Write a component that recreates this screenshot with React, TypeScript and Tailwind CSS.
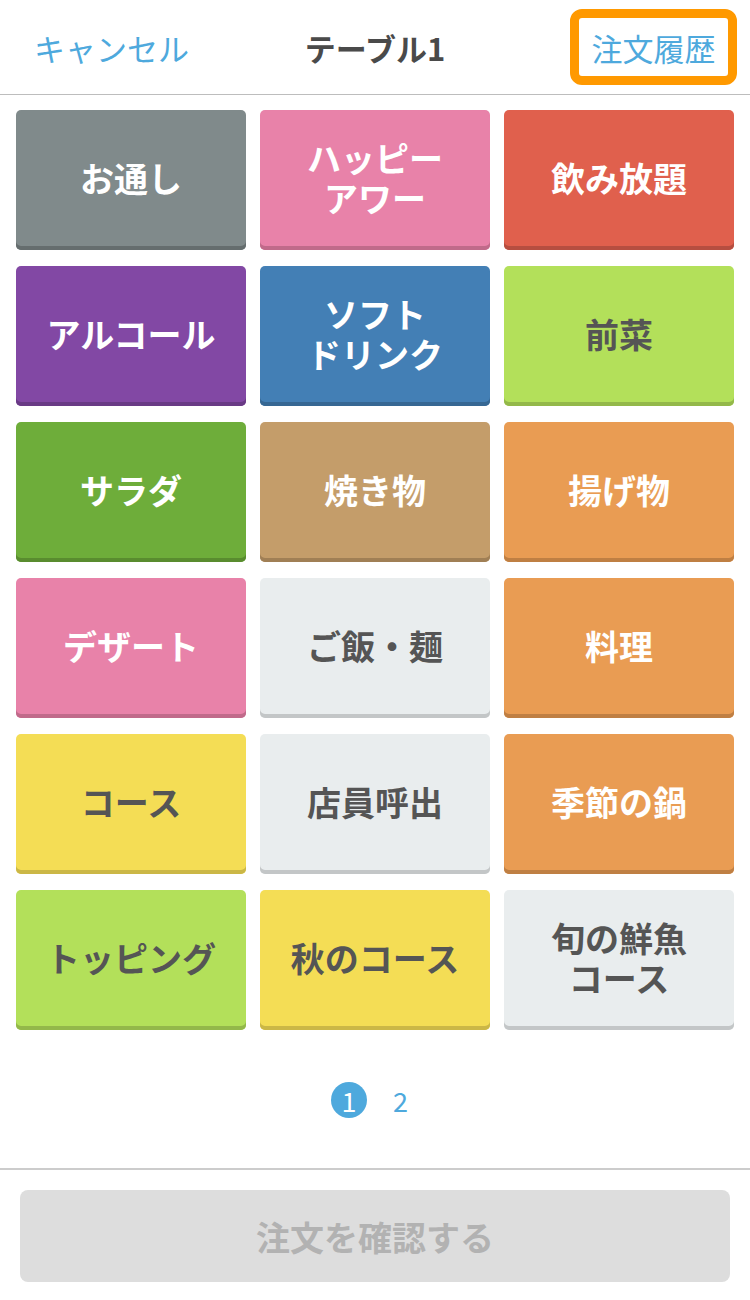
import React from 'react';

type Tile = {
  label: string[];
  bg: string;
  dark?: boolean;
};

// カテゴリーボタン一覧
const tiles: Tile[] = [
  { label: ['お通し'], bg: 'bg-[#808a8b] shadow-[inset_0_-4px_0_#656d6e]' },
  { label: ['ハッピー', 'アワー'], bg: 'bg-[#e882a9] shadow-[inset_0_-4px_0_#c06a8a]' },
  { label: ['飲み放題'], bg: 'bg-[#e0604d] shadow-[inset_0_-4px_0_#b64e40]' },
  { label: ['アルコール'], bg: 'bg-[#8248a4] shadow-[inset_0_-4px_0_#693a85]' },
  { label: ['ソフト', 'ドリンク'], bg: 'bg-[#437fb5] shadow-[inset_0_-4px_0_#366793]' },
  { label: ['前菜'], bg: 'bg-[#b3e05a] shadow-[inset_0_-4px_0_#93b84a]', dark: true },
  { label: ['サラダ'], bg: 'bg-[#6ead3a] shadow-[inset_0_-4px_0_#598c2f]' },
  { label: ['焼き物'], bg: 'bg-[#c49d6a] shadow-[inset_0_-4px_0_#a07f55]' },
  { label: ['揚げ物'], bg: 'bg-[#e99c53] shadow-[inset_0_-4px_0_#bf7f43]' },
  { label: ['デザート'], bg: 'bg-[#e882a9] shadow-[inset_0_-4px_0_#c06a8a]' },
  { label: ['ご飯・麺'], bg: 'bg-[#e9edee] shadow-[inset_0_-4px_0_#c3c6c7]', dark: true },
  { label: ['料理'], bg: 'bg-[#e99c53] shadow-[inset_0_-4px_0_#bf7f43]' },
  { label: ['コース'], bg: 'bg-[#f4dd55] shadow-[inset_0_-4px_0_#cbb746]', dark: true },
  { label: ['店員呼出'], bg: 'bg-[#e9edee] shadow-[inset_0_-4px_0_#c3c6c7]', dark: true },
  { label: ['季節の鍋'], bg: 'bg-[#e99c53] shadow-[inset_0_-4px_0_#bf7f43]' },
  { label: ['トッピング'], bg: 'bg-[#b3e05a] shadow-[inset_0_-4px_0_#93b84a]', dark: true },
  { label: ['秋のコース'], bg: 'bg-[#f4dd55] shadow-[inset_0_-4px_0_#cbb746]', dark: true },
  { label: ['旬の鮮魚', 'コース'], bg: 'bg-[#e9edee] shadow-[inset_0_-4px_0_#c3c6c7]', dark: true },
];

const font = "font-['Noto_Sans_CJK_JP','Noto_Sans',sans-serif]";

export default function App() {
  return (
    <div className={`w-[750px] h-[1300px] bg-white flex flex-col ${font}`}>
      {/* ヘッダー */}
      <header className="h-[95px] flex items-center justify-between border-b border-[#bdbdbd] pl-[34px] pr-[13px]">
        <span className="w-[179px] text-[31px] leading-none text-[#4ea9dd] whitespace-nowrap">キャンセル</span>
        <span className="text-[31px] leading-none font-bold text-[#4a4a4a]">テーブル1</span>
        <div className="w-[200px] flex justify-end">
          <div className="w-[167px] h-[76px] rounded-[12px] border-[9px] border-[#ff9900] flex items-center justify-center">
            <span className="text-[31px] leading-none text-[#4ea9dd] whitespace-nowrap">注文履歴</span>
          </div>
        </div>
      </header>

      {/* カテゴリー */}
      <div className="grid grid-cols-3 gap-x-[14px] gap-y-[16px] px-[16px] pt-[15px]">
        {tiles.map((t, i) => (
          <button
            key={i}
            className={`h-[140px] rounded-[5px] pb-[4px] flex items-center justify-center text-[34px] leading-[40px] font-bold text-center ${t.bg} ${
              t.dark ? 'text-[#555555]' : 'text-white'
            }`}
          >
            <span className="whitespace-nowrap">
              {t.label.map((l, j) => (
                <React.Fragment key={l}>
                  {j > 0 && <br />}
                  {l}
                </React.Fragment>
              ))}
            </span>
          </button>
        ))}
      </div>

      {/* ページ */}
      <div className="flex items-center justify-center gap-[26px] mt-[52px] pr-[11px]">
        <span className="w-[36px] h-[36px] rounded-full bg-[#4ea9dd] text-white text-[27px] leading-none flex items-center justify-center">
          1
        </span>
        <span className="text-[27px] leading-none text-[#4ea9dd]">2</span>
      </div>

      <div className="mt-[50px] border-t-2 border-[#cccccc]" />

      <div className="px-[20px] pt-[20px]">
        <button className="w-full h-[92px] rounded-[8px] bg-[#dddddd] text-[34px] font-bold text-[#b2b2b2]">
          注文を確認する
        </button>
      </div>
    </div>
  );
}
